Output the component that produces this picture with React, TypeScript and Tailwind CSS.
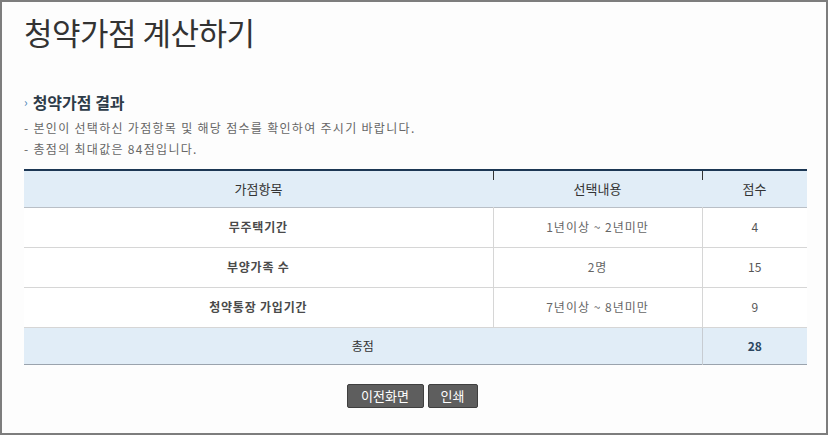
import React from "react";

const font = { fontFamily: '"Noto Sans CJK KR", "Noto Sans", sans-serif' };

const rows = [
  { item: "무주택기간", choice: "1년이상 ~ 2년미만", score: 4 },
  { item: "부양가족 수", choice: "2명", score: 15 },
  { item: "청약통장 가입기간", choice: "7년이상 ~ 8년미만", score: 9 },
];

export default function App() {
  const total = rows.reduce((s, r) => s + r.score, 0);

  return (
    <div className="w-[828px] h-[435px] bg-white" style={font}>
      <div className="h-full border-2 border-[#7d7d7d] bg-[#fdfdfd] px-[22px]">
        <h1 className="pt-[11px] text-[31px] leading-[38px] font-normal text-[#333] tracking-[-0.5px]">
          청약가점 계산하기
        </h1>

        <h2 className="mt-[41px] flex items-center gap-[5px] text-[16px] leading-[20px] font-bold text-[#2d3b48]">
          <span className="text-[12px] text-[#4b85b5] font-normal">›</span>
          청약가점 결과
        </h2>

        <div className="mt-[5px] text-[12px] leading-[21px] text-[#666] tracking-[1.3px]">
          <p>- 본인이 선택하신 가점항목 및 해당 점수를 확인하여 주시기 바랍니다.</p>
          <p>- 총점의 최대값은 84점입니다.</p>
        </div>

        <table className="mt-[10px] w-[783px] border-collapse text-[12px] text-center">
          <thead>
            <tr className="h-[37px] bg-[#e1edf7] border-t-2 border-[#1c3754] border-b border-b-[#b9bfc6] text-[#333] text-[13px]">
              <th className="w-[469px] font-normal">가점항목</th>
              <th className="relative w-[209px] font-normal">
                <span className="absolute left-0 top-0 h-[9px] w-px bg-[#333]" />
                선택내용
              </th>
              <th className="relative font-normal">
                <span className="absolute left-0 top-0 h-[9px] w-px bg-[#333]" />
                점수
              </th>
            </tr>
          </thead>
          <tbody>
            {rows.map((r) => (
              <tr key={r.item} className="h-[40px] border-b border-[#d6d6d6] bg-white">
                <td className="font-bold text-[#4a4a4a] border-r border-[#d6d6d6] tracking-[0.8px]">{r.item}</td>
                <td className="text-[#666] border-r border-[#d6d6d6] tracking-[1px]">{r.choice}</td>
                <td className="text-[#555]">{r.score}</td>
              </tr>
            ))}
            <tr className="h-[37px] bg-[#e1edf7] border-b border-[#9aa3ad]">
              <td colSpan={2} className="text-[#333] border-r border-[#c7ccd2]">총점</td>
              <td className="font-bold text-[#2c4660]">{total}</td>
            </tr>
          </tbody>
        </table>

        <div className="mt-[19px] flex justify-center gap-[4px] pr-[4px]">
          <button className="h-[24px] w-[77px] rounded-[2px] border border-[#3f3f3f] bg-[#5e5e5e] text-[13px] text-white">
            이전화면
          </button>
          <button className="h-[24px] w-[50px] rounded-[2px] border border-[#3f3f3f] bg-[#5e5e5e] text-[13px] text-white">
            인쇄
          </button>
        </div>
      </div>
    </div>
  );
}
